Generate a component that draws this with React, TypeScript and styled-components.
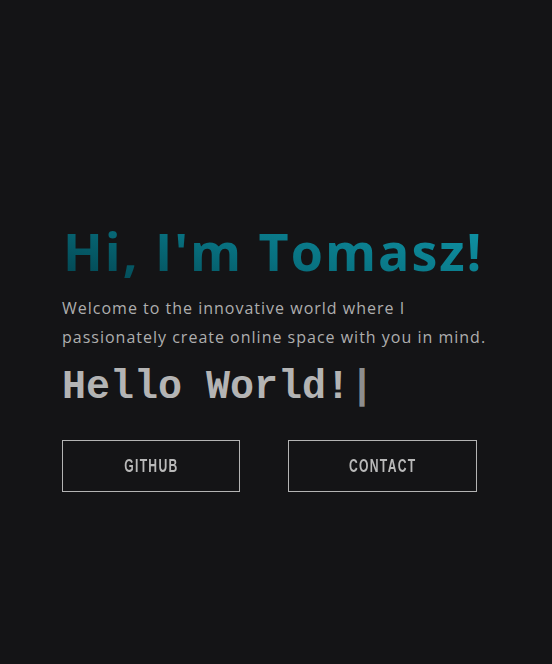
import styled, { createGlobalStyle } from 'styled-components';

const GlobalStyle = createGlobalStyle`
  html, body {
    margin: 0;
    padding: 0;
    background-color: #141416;
  }
  * {
    box-sizing: border-box;
  }
`;

const links = [
  { label: 'GitHub', width: 178 },
  { label: 'Contact', width: 189 },
];

export default function App() {
  return (
    <>
      <GlobalStyle />
      <Page>
        <Hero>
          <Title>Hi, I'm Tomasz!</Title>
          <Intro>
            Welcome to the innovative world where I
            <br />
            passionately create online space with you in mind.
          </Intro>
          <Typed>
            Hello World!<Cursor>|</Cursor>
          </Typed>
          <Actions>
            {links.map((link) => (
              <ActionButton key={link.label} $width={link.width}>
                <ButtonLabel>{link.label}</ButtonLabel>
              </ActionButton>
            ))}
          </Actions>
        </Hero>
      </Page>
    </>
  );
}

const Page = styled.main`
  min-height: 100vh;
  display: flex;
  align-items: center;
  padding: 46px 0 0 62px;
  background-color: #141416;
`;

const Hero = styled.section`
  display: flex;
  flex-direction: column;
  align-items: flex-start;
`;

const Title = styled.h1`
  margin: 0 0 0 1px;
  white-space: nowrap;
  font-family: 'Open Sans', sans-serif;
  font-weight: 700;
  font-size: 52px;
  line-height: 64px;
  letter-spacing: 2px;
  background: linear-gradient(15deg, #02434e 0%, #08707f 45%, #1096a8 100%);
  -webkit-background-clip: text;
  background-clip: text;
  color: transparent;
`;

const Intro = styled.p`
  margin: 11px 0 0;
  white-space: nowrap;
  font-family: 'Open Sans', sans-serif;
  font-size: 16px;
  line-height: 29px;
  letter-spacing: 1px;
  color: #aeaeae;
`;

const Typed = styled.div`
  margin-top: 10px;
  font-family: 'Liberation Mono', monospace;
  font-weight: 700;
  font-size: 40px;
  line-height: 52px;
  color: #b4b4b4;
`;

const Cursor = styled.span`
  color: #8e8e8e;
`;

const Actions = styled.div`
  display: flex;
  gap: 48px;
  margin-top: 26px;
`;

const ActionButton = styled.button<{ $width: number }>`
  width: ${(p) => p.$width}px;
  height: 52px;
  padding: 0;
  display: flex;
  align-items: center;
  justify-content: center;
  background: transparent;
  border: 1px solid #b4b4b4;
  cursor: pointer;
`;

const ButtonLabel = styled.span`
  display: inline-block;
  transform: scaleX(0.64);
  color: #b9b9b9;
  font-family: 'Liberation Sans', sans-serif;
  font-weight: 700;
  font-size: 19px;
  letter-spacing: 2px;
  text-transform: uppercase;
  white-space: nowrap;
`;
